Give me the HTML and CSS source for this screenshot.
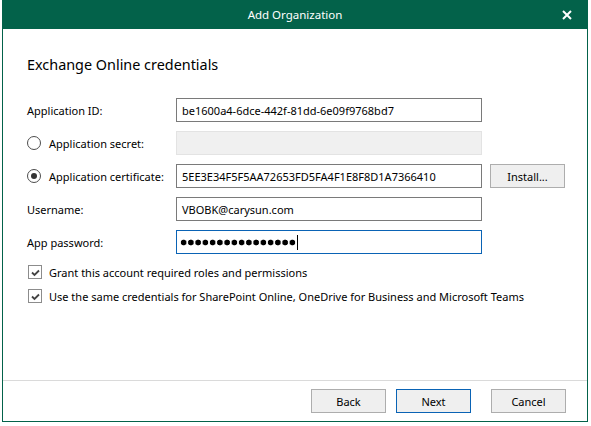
FILE: index.html
```html
<!DOCTYPE html>
<html>
<head>
<meta charset="utf-8">
<title>Add Organization</title>
<link rel="stylesheet" href="styles.css">
</head>
<body>

<div class="Window">
    <div class="TitleBar">
        <span></span>
        <span class="TitleText">Add Organization</span>
        <span class="CloseButton">
            <svg width="10" height="10" viewBox="0 0 10 10"><path d="M1 1 L9 9 M9 1 L1 9" stroke="#ffffff" stroke-width="2" fill="none"/></svg>
        </span>
    </div>

    <div class="Content">
        <div class="Heading">Exchange Online credentials</div>

        <div class="FormGrid">
            <div class="Label">Application ID:</div>
            <div class="Field">be1600a4-6dce-442f-81dd-6e09f9768bd7</div>
            <div></div>

            <div class="Label"><span class="Radio"></span>Application secret:</div>
            <div class="Field Disabled"></div>
            <div></div>

            <div class="Label"><span class="Radio Selected"></span>Application certificate:</div>
            <div class="Field">5EE3E34F5F5AA72653FD5FA4F1E8F8D1A7366410</div>
            <div class="Button">Install...</div>

            <div class="Label">Username:</div>
            <div class="Field">VBOBK@carysun.com</div>
            <div></div>

            <div class="Label">App password:</div>
            <div class="Field Focused"><span class="Dots"></span><span class="Caret"></span></div>
            <div></div>
        </div>

        <div class="CheckList">
            <div class="CheckRow">
                <span class="CheckBox"><svg width="11" height="11" viewBox="0 0 11 11"><path d="M2 5.5 L4.5 8 L9 3.5" stroke="#444444" stroke-width="1.8" fill="none"/></svg></span>
                Grant this account required roles and permissions
            </div>
            <div class="CheckRow">
                <span class="CheckBox"><svg width="11" height="11" viewBox="0 0 11 11"><path d="M2 5.5 L4.5 8 L9 3.5" stroke="#444444" stroke-width="1.8" fill="none"/></svg></span>
                Use the same credentials for SharePoint Online, OneDrive for Business and Microsoft Teams
            </div>
        </div>
    </div>

    <div class="Footer">
        <div class="Button">Back</div>
        <div class="Button Default">Next</div>
        <div class="Button Cancel">Cancel</div>
    </div>
</div>

</body>
</html>
```

FILE: styles.css
```css
	html, body {
		margin: 0;
		background: #ffffff;
		font-family: "Noto Sans", "Open Sans", Arial, sans-serif;
		font-size: 11px;
		color: #000000;
	}
	.Window {
		margin-left: 2px;
		width: 586px;
		height: 422px;
		box-sizing: border-box;
		border: 1px solid #03624a;
		border-top: 0;
		display: flex;
		flex-direction: column;
	}
	.TitleBar {
		height: 29px;
		margin: 0 -1px;
		background: #03624a;
		color: #ffffff;
		display: grid;
		grid-template-columns: 1fr auto 1fr;
		align-items: center;
	}
	.TitleText {
		font-size: 11.5px;
	}
	.CloseButton {
		justify-self: end;
		margin-right: 16px;
		display: flex;
	}
	.Content {
		flex: 1;
		padding-left: 24px;
	}
	.Heading {
		font-size: 14.4px;
		margin-top: 26px;
		margin-bottom: 24px;
	}
	.FormGrid {
		display: grid;
		grid-template-columns: 149px 306px 83px;
		row-gap: 9px;
		grid-auto-rows: 24px;
	}
	.Label {
		display: flex;
		align-items: center;
		white-space: nowrap;
	}
	.Field {
		box-sizing: border-box;
		border: 1px solid #7a7a7a;
		padding: 0 5px;
		display: flex;
		align-items: center;
		white-space: nowrap;
		overflow: hidden;
	}
	.Field.Disabled {
		background: #f0f0f0;
		border-color: #e3e3e3;
	}
	.Field.Focused {
		border-color: #0a63b5;
		padding-left: 3px;
	}
	.Dots {
		width: 116px;
		height: 7px;
		background: radial-gradient(circle, #000000 2.6px, transparent 3.2px) 0 0 / 7.25px 7px repeat-x;
	}
	.Caret {
		width: 1px;
		height: 15px;
		background: #000000;
		margin-left: 1px;
	}
	.Radio {
		box-sizing: border-box;
		width: 14px;
		height: 14px;
		border: 1px solid #4d4d4d;
		border-radius: 50%;
		margin: 0 8px 0 0;
		display: flex;
		align-items: center;
		justify-content: center;
	}
	.Radio.Selected::after {
		content: "";
		width: 6px;
		height: 6px;
		border-radius: 50%;
		background: #333333;
	}
	.Button {
		box-sizing: border-box;
		width: 75px;
		height: 24px;
		border: 1px solid #adadad;
		background: #efefef;
		display: flex;
		align-items: center;
		justify-content: center;
	}
	.FormGrid .Button {
		justify-self: end;
	}
	.CheckList {
		margin-top: 11px;
		display: flex;
		flex-direction: column;
		gap: 10px;
	}
	.CheckRow {
		display: flex;
		align-items: center;
		height: 14px;
	}
	.CheckBox {
		box-sizing: border-box;
		width: 14px;
		height: 14px;
		border: 1px solid #8c8c8c;
		margin: 0 7px 0 1px;
		display: flex;
		align-items: center;
		justify-content: center;
	}
	.Footer {
		height: 41px;
		box-sizing: border-box;
		border-top: 1px solid #dadada;
		display: flex;
		align-items: flex-start;
		justify-content: flex-end;
		padding: 8px 21px 0 0;
		gap: 10px;
	}
	.Button.Default {
		border-color: #0a63b5;
	}
	.Button.Cancel {
		margin-left: 10px;
	}
```
